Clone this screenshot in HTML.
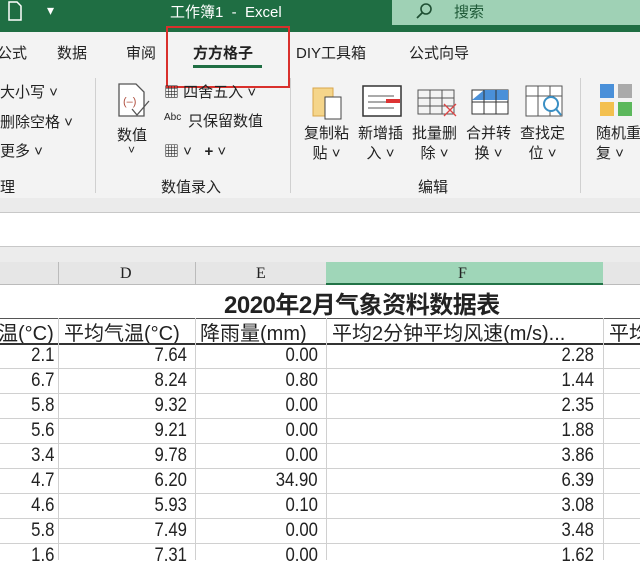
<!DOCTYPE html>
<html><head><meta charset="utf-8"><style>
*{margin:0;padding:0;box-sizing:border-box}
body{width:640px;height:560px;overflow:hidden;background:#fff;position:relative;font-family:"Liberation Sans","Noto Sans CJK SC",sans-serif;color:#222}
.a{position:absolute;white-space:nowrap}
.t{font-size:15px}
.h{font-size:20px;top:317px}
.num{position:absolute;font-size:19px;text-align:right;color:#222;font-family:"Liberation Sans Narrow","Liberation Sans",sans-serif;transform:scaleX(.88);transform-origin:right}
.hl{position:absolute;left:0;width:640px;height:1px;background:#d0d0d0}
.vl{position:absolute;width:1px;background:#d0d0d0}
</style></head><body>
<div class="a" style="left:0;top:0;width:640px;height:32px;background:#1f6e43"></div>
<div class="a" style="left:392px;top:0;width:248px;height:25px;background:#9fd1b5"></div>
<svg class="a" style="left:414px;top:2px" width="20" height="18"><circle cx="12" cy="7" r="5" fill="none" stroke="#1f4f33" stroke-width="1.6"/><line x1="8" y1="11" x2="3" y2="16" stroke="#1f4f33" stroke-width="1.8"/></svg>
<div class="a" style="left:454px;top:1px;font-size:15px;color:#1f5a38">搜索</div>
<svg class="a" style="left:8px;top:1px" width="14" height="20"><path d="M1 1h8l4 4v14H1z" fill="none" stroke="#fff" stroke-width="1.5"/></svg>
<div class="a" style="left:47px;top:2px;color:#fff;font-size:14px">▾</div>
<div class="a" style="left:170px;top:1px;color:#fff;font-size:15px">工作簿1&nbsp; - &nbsp;Excel</div>
<div class="a" style="left:0;top:32px;width:640px;height:166px;background:#f3f3f3"></div>
<div class="a t" style="left:-3px;top:42px">公式</div>
<div class="a t" style="left:57px;top:42px">数据</div>
<div class="a t" style="left:126px;top:42px">审阅</div>
<div class="a t" style="left:193px;top:42px;font-weight:bold">方方格子</div>
<div class="a" style="left:193px;top:65px;width:69px;height:3px;background:#1f6e43"></div>
<div class="a t" style="left:296px;top:42px">DIY工具箱</div>
<div class="a t" style="left:409px;top:42px">公式向导</div>
<div class="a" style="left:166px;top:26px;width:124px;height:62px;border:2px solid #d9302c"></div>
<div class="a t" style="left:0;top:81px">大小写 ˅</div>
<div class="a t" style="left:0;top:111px">删除空格 ˅</div>
<div class="a t" style="left:0;top:140px">更多 ˅</div>
<div class="a t" style="left:0;top:176px">理</div>
<div class="a" style="left:95px;top:78px;width:1px;height:115px;background:#d0d0d0"></div>
<svg class="a" style="left:116px;top:82px" width="40" height="40"><path d="M3 2h17l8 8v24H3z" fill="#fff" stroke="#555" stroke-width="1.3"/><text x="7" y="23" font-size="11" fill="#b05040">(–)</text><path d="M16 27l5 6 12-14" fill="none" stroke="#555" stroke-width="1.3"/></svg>
<div class="a t" style="left:117px;top:124px">数值</div>
<div class="a" style="left:128px;top:143px;font-size:12px">˅</div>
<div class="a t" style="left:164px;top:81px">▦ 四舍五入 ˅</div>
<div class="a" style="left:164px;top:112px;font-size:10px">Abc</div>
<div class="a t" style="left:188px;top:110px">只保留数值</div>
<div class="a t" style="left:164px;top:140px">▦ ˅ &nbsp; <b>+</b> ˅</div>
<div class="a t" style="left:161px;top:176px">数值录入</div>
<div class="a" style="left:290px;top:78px;width:1px;height:115px;background:#d0d0d0"></div>
<svg class="a" style="left:310px;top:82px" width="290" height="40">
<rect x="3" y="6" width="20" height="28" fill="#f5d58a" stroke="#d9a64b"/><rect x="15" y="15" width="16" height="22" fill="#fff" stroke="#444"/>
<rect x="53" y="4" width="38" height="30" fill="#fff" stroke="#333" stroke-width="1.5"/><line x1="58" y1="14" x2="84" y2="14" stroke="#555"/><line x1="58" y1="20" x2="76" y2="20" stroke="#555"/><rect x="76" y="17" width="14" height="4" fill="#d33"/><line x1="58" y1="26" x2="84" y2="26" stroke="#555"/>
<path d="M108 8h36v24h-36zM108 16h36M108 24h36M120 8v24M132 8v24" fill="none" stroke="#555"/><path d="M134 22l12 12M146 22l-12 12" stroke="#d44" stroke-width="1.3"/>
<rect x="162" y="8" width="36" height="24" fill="#fff" stroke="#333"/><path d="M162 18l12-10h24v10z" fill="#4a90d9"/><path d="M162 20h36M174 8v24M186 8v24" stroke="#333"/>
<path d="M216 4h36v30h-36zM216 14h36M228 4v30M240 4v30" fill="#fff" stroke="#555"/><circle cx="241" cy="22" r="7" fill="#fff" stroke="#3a8fc4" stroke-width="2"/><line x1="246" y1="27" x2="251" y2="33" stroke="#3a8fc4" stroke-width="2"/>
</svg>
<div class="a t" style="left:304px;top:124px;line-height:20px;text-align:center">复制粘<br>贴 ˅</div>
<div class="a t" style="left:358px;top:124px;line-height:20px;text-align:center">新增插<br>入 ˅</div>
<div class="a t" style="left:412px;top:124px;line-height:20px;text-align:center">批量删<br>除 ˅</div>
<div class="a t" style="left:466px;top:124px;line-height:20px;text-align:center">合并转<br>换 ˅</div>
<div class="a t" style="left:520px;top:124px;line-height:20px;text-align:center">查找定<br>位 ˅</div>
<div class="a t" style="left:418px;top:176px">编辑</div>
<div class="a" style="left:580px;top:78px;width:1px;height:115px;background:#d0d0d0"></div>
<svg class="a" style="left:598px;top:82px" width="42" height="40"><rect x="2" y="2" width="14" height="14" fill="#4a90d9"/><rect x="20" y="2" width="14" height="14" fill="#aaa"/><rect x="2" y="20" width="14" height="14" fill="#f3c04f"/><rect x="20" y="20" width="14" height="14" fill="#5cb85c"/></svg>
<div class="a t" style="left:596px;top:124px;line-height:20px">随机重<br>复 ˅</div>
<div class="a" style="left:0;top:198px;width:640px;height:15px;background:#ebebeb"></div>
<div class="hl" style="top:212px;background:#c8c8c8"></div>
<div class="a" style="left:0;top:246px;width:640px;height:16px;background:#ececec;border-top:1px solid #c8c8c8"></div>
<div class="a" style="left:0;top:262px;width:640px;height:23px;background:#e6e6e6;border-bottom:1px solid #bbb"></div>
<div class="a" style="left:326px;top:262px;width:277px;height:23px;background:#9fd6b8;border-bottom:2px solid #217346"></div>
<div class="vl" style="left:58px;top:262px;height:23px;background:#bbb"></div>
<div class="vl" style="left:195px;top:262px;height:23px;background:#bbb"></div>
<div class="a" style="left:120px;top:265px;font-family:'Liberation Serif',serif;font-size:16px">D</div>
<div class="a" style="left:256px;top:265px;font-family:'Liberation Serif',serif;font-size:16px">E</div>
<div class="a" style="left:458px;top:265px;font-family:'Liberation Serif',serif;font-size:16px">F</div>
<div class="a" style="left:224px;top:285px;font-size:24px;font-weight:bold;letter-spacing:-0.5px">2020年2月气象资料数据表</div>
<div class="hl" style="top:318px;background:#555"></div>
<div class="a h" style="left:-2px">温(°C)</div>
<div class="a h" style="left:64px">平均气温(°C)</div>
<div class="a h" style="left:200px">降雨量(mm)</div>
<div class="a h" style="left:332px">平均2分钟平均风速(m/s)...</div>
<div class="a h" style="left:609px">平均</div>
<div class="hl" style="top:343px;height:2px;background:#333"></div>
<div class="vl" style="left:58px;top:318px;height:242px"></div>
<div class="vl" style="left:195px;top:318px;height:242px"></div>
<div class="vl" style="left:326px;top:318px;height:242px"></div>
<div class="vl" style="left:603px;top:318px;height:242px"></div>
<div class="hl" style="top:368px"></div><div class="hl" style="top:393px"></div><div class="hl" style="top:418px"></div><div class="hl" style="top:443px"></div><div class="hl" style="top:468px"></div><div class="hl" style="top:493px"></div><div class="hl" style="top:518px"></div><div class="hl" style="top:543px"></div>
<div class="num" style="right:586px;top:345px">2.1</div><div class="num" style="right:453px;top:345px">7.64</div><div class="num" style="right:322px;top:345px">0.00</div><div class="num" style="right:46px;top:345px">2.28</div>
<div class="num" style="right:586px;top:370px">6.7</div><div class="num" style="right:453px;top:370px">8.24</div><div class="num" style="right:322px;top:370px">0.80</div><div class="num" style="right:46px;top:370px">1.44</div>
<div class="num" style="right:586px;top:395px">5.8</div><div class="num" style="right:453px;top:395px">9.32</div><div class="num" style="right:322px;top:395px">0.00</div><div class="num" style="right:46px;top:395px">2.35</div>
<div class="num" style="right:586px;top:420px">5.6</div><div class="num" style="right:453px;top:420px">9.21</div><div class="num" style="right:322px;top:420px">0.00</div><div class="num" style="right:46px;top:420px">1.88</div>
<div class="num" style="right:586px;top:445px">3.4</div><div class="num" style="right:453px;top:445px">9.78</div><div class="num" style="right:322px;top:445px">0.00</div><div class="num" style="right:46px;top:445px">3.86</div>
<div class="num" style="right:586px;top:470px">4.7</div><div class="num" style="right:453px;top:470px">6.20</div><div class="num" style="right:322px;top:470px">34.90</div><div class="num" style="right:46px;top:470px">6.39</div>
<div class="num" style="right:586px;top:495px">4.6</div><div class="num" style="right:453px;top:495px">5.93</div><div class="num" style="right:322px;top:495px">0.10</div><div class="num" style="right:46px;top:495px">3.08</div>
<div class="num" style="right:586px;top:520px">5.8</div><div class="num" style="right:453px;top:520px">7.49</div><div class="num" style="right:322px;top:520px">0.00</div><div class="num" style="right:46px;top:520px">3.48</div>
<div class="num" style="right:586px;top:545px">1.6</div><div class="num" style="right:453px;top:545px">7.31</div><div class="num" style="right:322px;top:545px">0.00</div><div class="num" style="right:46px;top:545px">1.62</div>
</body></html>
